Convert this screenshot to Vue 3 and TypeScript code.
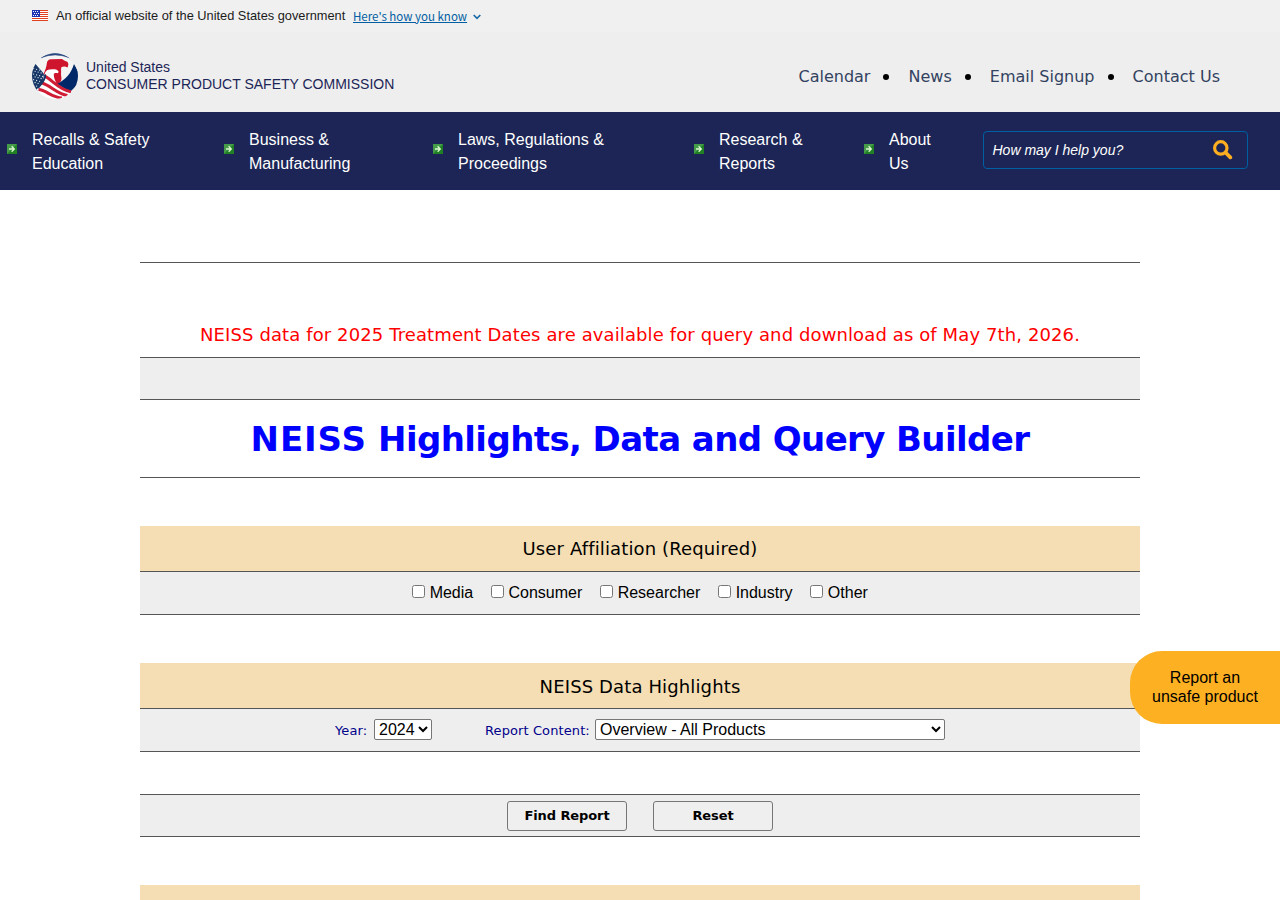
<script setup lang="ts">
import { ref } from 'vue'

interface NavItem { lines: [string, string]; width: number }

const utilityLinks: string[] = ['Calendar', 'News', 'Email Signup', 'Contact Us']
const navItems: NavItem[] = [
  { lines: ['Recalls & Safety', 'Education'], width: 217 },
  { lines: ['Business &', 'Manufacturing'], width: 209 },
  { lines: ['Laws, Regulations &', 'Proceedings'], width: 261 },
  { lines: ['Research &', 'Reports'], width: 170 },
  { lines: ['About', 'Us'], width: 119 },
]
const affiliations: string[] = ['Media', 'Consumer', 'Researcher', 'Industry', 'Other']
const selected = ref<string[]>([])
const year = ref('2024')
const report = ref('Overview - All Products')

const stars: [number, number][] = []
for (let r = 0; r < 7; r++) for (let c = 0; c < 4; c++) stars.push([1.6 + c * 3 + (r % 2) * 1.5, 15.5 + r * 2.8 + c * 0.8])
</script>

<template>
  <div class="page">
    <section class="banner">
      <svg class="flag" width="16" height="11" viewBox="0 0 16 11" shape-rendering="crispEdges">
        <rect width="16" height="11" fill="#fff" />
        <path d="M0 .5h16M0 2.5h16M0 4.5h16M0 6.5h16M0 8.5h16M0 10.5h16" stroke="#e0401f" />
        <rect width="8" height="7" fill="#1e33b1" />
        <path d="M1 1.5h1M3 1.5h1M5 1.5h1M2 3.5h1M4 3.5h1M6 3.5h1M1 5.5h1M3 5.5h1M5 5.5h1" stroke="#fff" />
      </svg>
      <span class="official">An official website of the United States government</span>
      <a class="how">Here's how you know</a>
      <svg class="chevron" width="8" height="6" viewBox="0 0 8 6"><path d="M.7 1 4 4.300 7.300 1" fill="none" stroke="#1a6aa8" stroke-width="1.700" /></svg>
    </section>

    <header class="masthead">
      <div class="brand">
        <svg class="seal" width="46" height="46" viewBox="0 0 46 46">
          <defs><clipPath id="disc"><circle cx="23" cy="23" r="23" /></clipPath></defs>
          <g clip-path="url(#disc)">
            <circle cx="23" cy="23" r="22" fill="#f4f4f4" />
            <path d="M0 10V0H46V10L37.500 4.800Q23-2.500 9 4.800Z" fill="#eee" />
            <path d="M9 4.800Q23-4.500 37.500 4.800 23-1 9 4.800Z" fill="#2a4880" stroke="#2a4880" stroke-width=".5" />
            <path d="M3.500 11 13 22 12 30 7 38H-1V11Z" fill="#163766" />
            <circle v-for="(s, i) in stars" :key="i" :cx="s[0]" :cy="s[1]" r=".65" fill="#e4e9f2" />
            <path d="M11.500 21C13.500 17 14.500 13 14.800 10.500 15 8 16.500 6.200 19 6.200L30 6C32 7.500 33.500 8 35.500 9c1.200 1.500 1 3.500 0 5.500-2-1.300-4-1.200-6-.5C28.500 17 29.500 18 29 21c0 3 1 4 0 7l-3 4Z" fill="#cf152d" />
            <path d="M12.500 21.500c1-4 3-5 6-5 3-.3 6-.3 7.500 1.300 1 1 .5 2-.5 2.500-1-.6-3-.4-3.700.5 0 2.500.2 5 2.500 9.200L18 27Z" fill="#fff" />
            <path d="M42 11 47 20V30L38 39 25 31C33 27 39 21 42 11Z" fill="#002868" />
            <path d="M12 21.500C20 25 28 36 39 38L32 47H12L4 37 10 31Z" fill="#fff" />
            <path d="M12.500 22.900C20 26.800 27 36.800 39 38.800M10 30C18 32 25 41 35.500 42.500M6.500 36.500C14 37 20 44.500 30 45" fill="none" stroke="#cf1d35" stroke-width="3.100" />
            <path d="M12.800 21.500C14 23 12 27 9.500 30.500L6 35" fill="none" stroke="#163766" stroke-width="2" />
          </g>
        </svg>
        <div class="agency">United States<br>CONSUMER PRODUCT SAFETY COMMISSION</div>
      </div>
      <nav class="utility">
        <template v-for="(l, i) in utilityLinks" :key="l"><i v-if="i" class="dot"></i><a>{{ l }}</a></template>
      </nav>
    </header>

    <div class="mainnav">
      <div v-for="n in navItems" :key="n.lines[0]" class="navitem" :style="{ width: n.width + 'px' }">
        <svg width="10" height="10" viewBox="0 0 10 10">
          <rect width="10" height="10" fill="#1f8024" />
          <path d="M0 0h10L0 10Z" fill="#55a858" opacity=".7" />
          <path d="M2 5h5.200M4.600 2.300 7.300 5 4.600 7.700" fill="none" stroke="#dcf8d0" stroke-width="1.300" />
        </svg>
        <a>{{ n.lines[0] }}<br>{{ n.lines[1] }}</a>
      </div>
      <div class="search">
        <span>How may I help you?</span>
        <svg width="20" height="20" viewBox="0 0 20 20"><circle cx="7.800" cy="7.900" r="6.200" fill="none" stroke="#fdae21" stroke-width="3.200" /><path d="m12.500 12.500 4.800 4.900" stroke="#fdae21" stroke-width="3.700" stroke-linecap="round" /></svg>
      </div>
    </div>

    <main>
      <hr>
      <p class="notice">NEISS data for 2025 Treatment Dates are available for query and download as of May 7th, 2026.</p>
      <div class="strip"></div>
      <h1><span>NEISS</span> Highlights, Data and Query Builder</h1>

      <h2>User Affiliation (Required)</h2>
      <div class="row checks">
        <label v-for="a in affiliations" :key="a"><input v-model="selected" type="checkbox" :value="a"><span>{{ a }}</span></label>
      </div>

      <h2 class="highlights">NEISS Data Highlights</h2>
      <div class="row filters">
        <label for="year">Year:</label>
        <select id="year" v-model="year" class="year"><option>2024</option></select>
        <label for="report" class="second">Report Content:</label>
        <select id="report" v-model="report" class="report"><option>Overview - All Products</option></select>
      </div>
      <div class="row actions">
        <button type="button">Find Report</button>
        <button type="button">Reset</button>
      </div>
      <h2></h2>
    </main>

    <a class="unsafe">Report an<br>unsafe product</a>
  </div>
</template>

<style>
html, body { margin: 0; overflow: hidden; }
</style>

<style scoped>
.page { position: relative; height: 900px; overflow: hidden; background: #fff; color: #000; font: 16px "Liberation Sans", Arial, sans-serif; }
.banner { height: 32px; display: flex; align-items: center; padding-left: 32px; background: #f0f0f0; }
.flag { margin-right: 8px; margin-bottom: 1px; }
.official { font-size: 12.800px; line-height: 16px; color: #1b1b1b; width: 297px; white-space: nowrap; }
.how { font: 11.500px/16px "Noto Sans CJK SC", sans-serif; color: #005ea2; text-decoration: underline; white-space: nowrap; margin-top: -1px; }
.chevron { margin: 2px 0 0 6px; }

.masthead { height: 80px; background: #eee; display: flex; justify-content: space-between; }
.brand { display: flex; padding: 21px 0 0 32px; }
.seal { margin-right: 8px; }
.agency { padding-top: 6px; font-size: 14px; line-height: 17px; color: #1c2557; }
.utility { display: flex; align-items: center; height: 24px; margin: 32px 60px 0 0; font-family: "DejaVu Sans", sans-serif; color: #32425f; }
.dot { width: 6px; height: 6px; border-radius: 50%; background: #000; margin: 2px 19.100px 0 13px; }

.mainnav { height: 78px; background: #1c2555; display: flex; padding-left: 7px; box-sizing: border-box; color: #fff; }
.navitem { flex: none; display: flex; line-height: 24px; padding-top: 16px; box-sizing: border-box; white-space: nowrap; }
.navitem svg { margin: 16px 15px 0 0; flex: none; }
.search { width: 265px; height: 38px; margin-top: 19px; box-sizing: border-box; border: 1px solid #005ea2; border-radius: 4px; display: flex; align-items: center; justify-content: space-between; padding: 0 14px 0 8.500px; font-size: 14px; font-style: italic; }

main { width: 1000px; margin: 0 auto; font-family: "DejaVu Sans", sans-serif; }
hr { margin: 72px 0 0; border: 0; height: 1px; background: #555; }
.notice { margin: 0; height: 49px; padding-top: 45px; line-height: 54px; font-size: 18px; letter-spacing: .11px; color: #f00; text-align: center; white-space: nowrap; }
.strip { height: 41px; border: solid #555; border-width: 1px 0; background: #eee; }
h1 { margin: 0 0 48px; height: 77px; line-height: 79px; border-bottom: 1px solid #555; font-size: 34px; letter-spacing: -.600px; color: #00f; text-align: center; white-space: nowrap; }
h1 span { letter-spacing: .900px; }
h2 { margin: 0; height: 45px; line-height: 45px; background: #f5deb3; font-size: 18px; font-weight: 400; letter-spacing: .13px; text-align: center; }
.highlights { line-height: 47px; }
.row { height: 42px; border: solid #555; border-width: 1px 0; background: #eee; display: flex; justify-content: center; }
.checks { margin-bottom: 48px; gap: 17.800px; font-family: "Liberation Sans", Arial, sans-serif; }
.checks label { display: flex; line-height: 42px; gap: 4.500px; }
.checks input { width: 13px; height: 13px; margin: 13px 0 0; }
.filters { margin-bottom: 42px; font-size: 13px; line-height: 43px; color: #00008b; }
.filters label { width: 34px; letter-spacing: .1px; white-space: nowrap; }
select { font: 16px "Liberation Sans", Arial, sans-serif; height: 21px; box-sizing: border-box; margin: 10px 0 0 5px; padding: 0; border: 1px solid #767676; border-radius: 2px; background-color: #fff; color: #000; }
.year { width: 58px; }
.report { width: 350px; }
.filters .second { width: 105px; margin-left: 53px; }
.actions { height: 41px; margin-bottom: 48px; gap: 26px; }
button { width: 120px; height: 30px; margin: 6px 0 0; padding: 0 0 2px; border: 1px solid #767676; border-radius: 3px; background: #efefef; color: #000; font: bold 13px "DejaVu Sans", sans-serif; letter-spacing: -.1px; }
.unsafe { position: absolute; left: 1130px; top: 651px; width: 150px; height: 73px; padding-top: 17px; box-sizing: border-box; border-radius: 32px 0 0 32px; background: #fdb022; text-align: center; line-height: 19px; }
</style>
